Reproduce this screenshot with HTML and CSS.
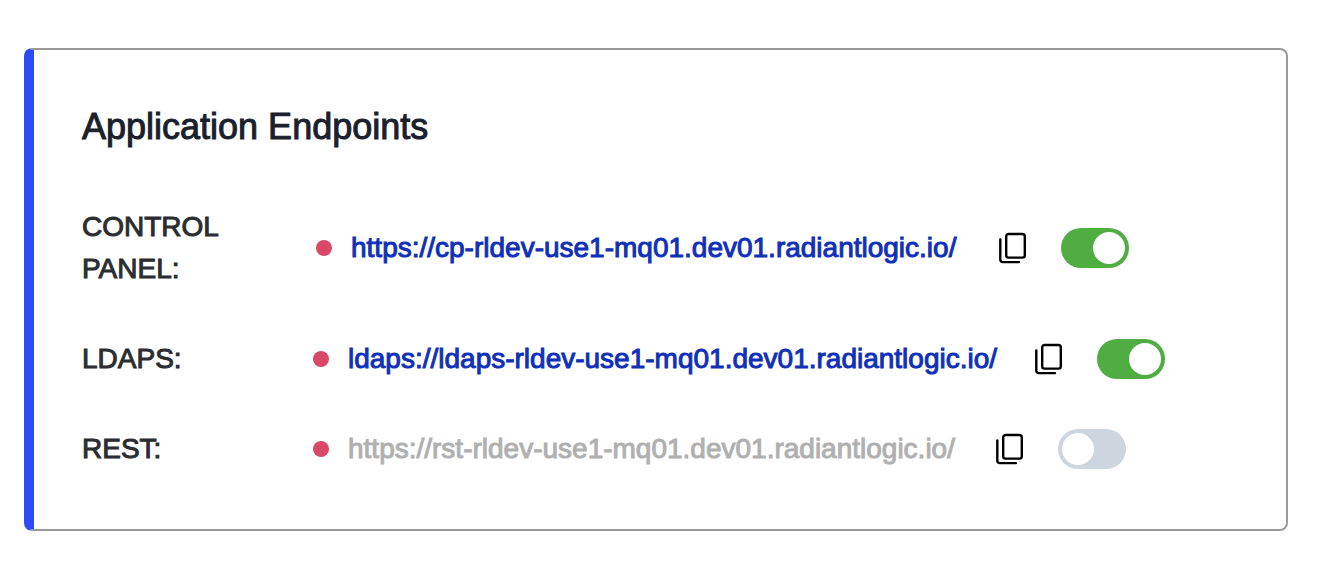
FILE: index.html
```html
<!DOCTYPE html>
<html lang="en">
<head>
<meta charset="utf-8">
<meta name="viewport" content="width=device-width, initial-scale=1">
<title>Application Endpoints</title>
<link rel="stylesheet" href="styles.css">
</head>
<body>
<svg class="sprite" aria-hidden="true">
  <symbol id="copy" viewBox="0 0 28 32">
    <rect x="7.2" y="2" width="18.6" height="23.6" rx="2.4"/>
    <path d="M1.3 7.5v20.2a2.4 2.4 0 0 0 2.4 2.4H20"/>
  </symbol>
</svg>
<main class="card">
  <h1 class="title">Application Endpoints</h1>
  <ul class="rows">
    <li class="row row-wrapped">
      <label class="name" for="cp">CONTROL PANEL:</label>
      <span class="dot"></span>
      <a class="link" href="https://cp-rldev-use1-mq01.dev01.radiantlogic.io/">https://cp-rldev-use1-mq01.dev01.radiantlogic.io/</a>
      <button class="copy" type="button" aria-label="Copy control panel URL"><svg class="icon"><use href="#copy"/></svg></button>
      <input class="toggle" id="cp" type="checkbox" role="switch" checked>
    </li>
    <li class="row row-long">
      <label class="name" for="ldaps">LDAPS:</label>
      <span class="dot"></span>
      <a class="link" href="ldaps://ldaps-rldev-use1-mq01.dev01.radiantlogic.io/">ldaps://ldaps-rldev-use1-mq01.dev01.radiantlogic.io/</a>
      <button class="copy" type="button" aria-label="Copy LDAPS URL"><svg class="icon"><use href="#copy"/></svg></button>
      <input class="toggle" id="ldaps" type="checkbox" role="switch" checked>
    </li>
    <li class="row">
      <label class="name" for="rest">REST:</label>
      <span class="dot"></span>
      <a class="link link-off" href="https://rst-rldev-use1-mq01.dev01.radiantlogic.io/">https://rst-rldev-use1-mq01.dev01.radiantlogic.io/</a>
      <button class="copy" type="button" aria-label="Copy REST URL"><svg class="icon"><use href="#copy"/></svg></button>
      <input class="toggle" id="rest" type="checkbox" role="switch">
    </li>
  </ul>
</main>
</body>
</html>
```
FILE: styles.css
```css
* { box-sizing: border-box; }
body {
  margin: 0;
  padding: 48px 36px 32px 24px;
  background: #fff;
  color: #2b2d31;
  font-family: "Liberation Sans", Arial, sans-serif;
  font-size: 28px;
  line-height: 42px;
}
.sprite { position: absolute; width: 0; height: 0; }
.card {
  padding: 53px 48px 59px;
  border: 2px solid #999;
  border-left: 10px solid #2e4af6;
  border-radius: 8px;
}
.title {
  margin: 0 0 55px;
  color: #1a202c;
  font-size: 36px;
  font-weight: 400;
  line-height: 48px;
  -webkit-text-stroke: 1px currentColor;
}
.rows {
  display: flex;
  flex-direction: column;
  gap: 48px;
  margin: 0;
  padding: 0;
  list-style: none;
}
.row {
  display: grid;
  grid-template-columns: 212px 16px 629px 43px 68px;
  column-gap: 19px;
  align-items: center;
}
.row-wrapped { grid-template-columns: 215px 16px 629px 43px 68px; }
.row-long { grid-template-columns: 212px 16px 668px 43px 68px; }
.name { max-width: 160px; -webkit-text-stroke: 1px currentColor; }
.dot { width: 16px; height: 16px; border-radius: 50%; background: #d94867; }
.link {
  justify-self: start;
  color: #1130b8;
  text-decoration: none;
  white-space: nowrap;
  -webkit-text-stroke: 1px currentColor;
}
.link-off { color: #b0b0b0; }
.copy {
  display: flex;
  justify-self: start;
  padding: 0;
  border: 0;
  background: none;
  cursor: pointer;
}
.icon { width: 28px; height: 32px; fill: none; stroke: #000; stroke-width: 2.4; stroke-linecap: round; }
.toggle {
  display: flex;
  align-items: center;
  width: 68px;
  height: 40px;
  margin: 0;
  padding: 4px;
  appearance: none;
  border-radius: 20px;
  background: #cdd5df;
  cursor: pointer;
}
.toggle::before { content: ""; width: 32px; height: 32px; border-radius: 50%; background: #fff; }
.toggle:checked { justify-content: flex-end; background: #4fad42; }
```
